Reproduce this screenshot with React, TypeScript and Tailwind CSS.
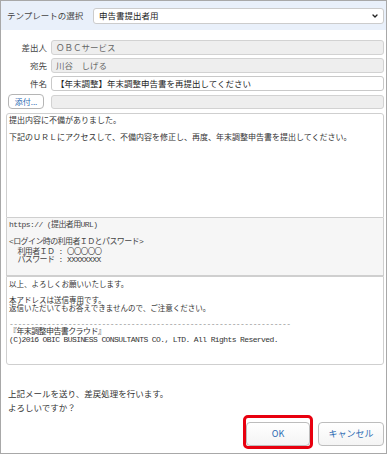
import React from "react";
import { ChevronDown } from "lucide-react";

const jp = "font-['Noto_Sans_CJK_JP',sans-serif]";
const mono = "font-['Liberation_Mono','Noto_Sans_CJK_JP',monospace]";

const Field = ({
  label,
  value,
  disabled = false,
}: {
  label: string;
  value: string;
  disabled?: boolean;
}) => (
  <div className="flex items-center h-[15px] mb-[3px]">
    <div className="w-[41px] text-right text-[8.5px] text-[#444] leading-none">{label}</div>
    <div
      className={`ml-[4px] flex-1 h-[15px] flex items-center px-[4px] rounded-[3px] border text-[8.5px] leading-none ${
        disabled
          ? "bg-[#eeeeee] border-[#d2d2d2] text-[#666]"
          : "bg-white border-[#c9c9c9] text-[#222]"
      }`}
    >
      {value}
    </div>
  </div>
);

export default function App() {
  const dashes = "-".repeat(67);

  return (
    <div className={`w-[387px] h-[454px] border border-[#a8a8a8] bg-white flex flex-col ${jp} text-[#333]`}>
      {/* Template select header */}
      <div className="h-[29px] bg-[#e9f0fa] flex items-center pl-[6px] pr-[2px]">
        <div className="w-[86px] text-[8.5px] text-[#444] leading-none">テンプレートの選択</div>
        <div className="flex-1 h-[16px] bg-white border border-[#cccccc] rounded-[3px] flex items-center justify-between pl-[5px] pr-[4px] text-[8.5px] text-[#222] leading-none">
          <span>申告書提出者用</span>
          <ChevronDown size={8} strokeWidth={4} className="text-[#222]" />
        </div>
      </div>

      {/* Body */}
      <div className="flex-1 flex flex-col pl-[5px] pr-[2px] pt-[10px]">
        <Field label="差出人" value="ＯＢＣサービス" disabled />
        <Field label="宛先" value="川谷　しげる" disabled />
        <Field label="件名" value="【年末調整】年末調整申告書を再提出してください" />

        {/* Attachment row */}
        <div className="flex items-center h-[15px]">
          <div className="w-[41px] flex">
            <button className="ml-[2px] w-[36px] h-[15px] rounded-[4px] border border-[#b5b5b5] bg-white text-[8px] text-[#2d6bb3] leading-none">
              添付...
            </button>
          </div>
          <div className="ml-[4px] flex-1 h-[14px] rounded-[3px] border border-[#d2d2d2] bg-[#eeeeee]" />
        </div>

        {/* Message body */}
        <div className="mt-[4px] flex flex-col">
          <div className="h-[105px] border border-[#cfcfcf] rounded-t-[3px] bg-white px-[2px] pt-[1px] text-[8px] leading-[9px] text-[#333]">
            <p className="mb-[8px]">提出内容に不備がありました。</p>
            <p>下記のＵＲＬにアクセスして、不備内容を修正し、再度、年末調整申告書を提出してください。</p>
          </div>
          <div
            className={`h-[58px] border border-t-0 border-[#cfcfcf] bg-[#f6f6f6] px-[2px] pt-[3px] ${mono} text-[8px] tracking-[-0.6px] leading-[8.5px] text-[#444] whitespace-pre`}
          >
            {"https:// (提出者用URL)\n\n<ログイン時の利用者ＩＤとパスワード>\n  利用者ＩＤ : "}
            <span className={`${jp} text-[7.5px]`}>〇〇〇〇〇</span>
            {"\n  パスワード : XXXXXXXX"}
          </div>
          <div className="h-[89px] border border-[#cfcfcf] rounded-b-[3px] bg-white px-[2px] pt-[3px] text-[7.5px] leading-[8px] text-[#333]">
            <p>以上、よろしくお願いいたします。</p>
            <p className="mt-[8px]">本アドレスは送信専用です。</p>
            <p>返信いただいてもお答えできませんので、ご注意ください。</p>
            <div className={`mt-[8px] ${mono} text-[8px] tracking-[-0.6px] text-[#333] whitespace-pre`}>
              <div className="text-[#8a8a8a]">{dashes}</div>
              <div>『年末調整申告書クラウド』</div>
              <div>(C)2016 OBIC BUSINESS CONSULTANTS CO., LTD. All Rights Reserved.</div>
            </div>
          </div>
        </div>

        {/* Confirmation */}
        <div className="mt-[21px] pl-[2px] text-[8.5px] leading-[14px] text-[#333]">
          <p>上記メールを送り、差戻処理を行います。</p>
          <p>よろしいですか？</p>
        </div>

        {/* Actions */}
        <div className="mt-[1px] flex items-center justify-end gap-[5px]">
          <div className="border-[3px] border-[#e8000f] rounded-[5px]">
            <button className="w-[64px] h-[24px] rounded-[4px] border border-[#bdbdbd] bg-gradient-to-b from-white to-[#f4f4f4] text-[9px] text-[#2d6bb3]">
              OK
            </button>
          </div>
          <button className="w-[66px] h-[24px] mt-[4px] rounded-[4px] border border-[#bdbdbd] bg-gradient-to-b from-white to-[#f4f4f4] text-[9px] text-[#2d6bb3]">
            キャンセル
          </button>
        </div>
      </div>
    </div>
  );
}
